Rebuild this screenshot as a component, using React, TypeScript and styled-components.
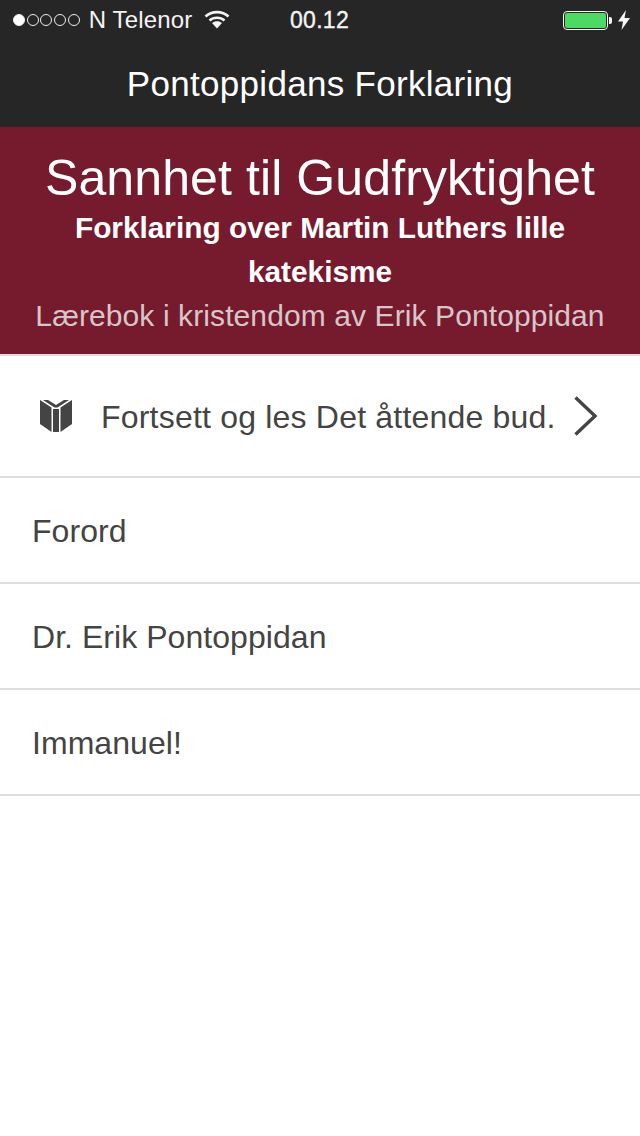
import React from "react";
import styled, { createGlobalStyle } from "styled-components";

const Global = createGlobalStyle`
  html, body { margin: 0; padding: 0; background: #fff; }
  body { font-family: "Liberation Sans", Arial, sans-serif; }
`;
const Page = styled.div`
  width: 640px; height: 1136px; overflow: hidden; background: #fff; display: flex; flex-direction: column;
`;
const TopBar = styled.header`
  height: 127px; background: #262626; color: #fff; display: flex; flex-direction: column; flex: none;
`;
const Status = styled.div`
  height: 40px; display: grid; grid-template-columns: 1fr auto 1fr; align-items: center; padding: 0 10px 0 13px; font-size: 24px; line-height: 40px; color: #f4f4f4;
`;
const StatusLeft = styled.div`display: flex; align-items: center;`;
const Carrier = styled.span`margin-left: 9px; letter-spacing: 0.15px;`;
const Wifi = styled.svg`margin-left: 12px; margin-top: -3px;`;
const Clock = styled.span`font-size: 23px; letter-spacing: 0.3px; padding-right: 4px; -webkit-text-stroke: 0.35px #f4f4f4;`;
const StatusRight = styled.div`display: flex; align-items: center; justify-content: flex-end; gap: 6px;`;
const Dots = styled.div`display: flex; gap: 1.7px; align-items: center;`;
const Dot = styled.span<{ $on?: boolean }>`
  width: 12px; height: 12px; border-radius: 50%; box-sizing: border-box; border: 1.3px solid #eee; background: ${p => (p.$on ? "#fff" : "transparent")};
`;
const Battery = styled.div`display: flex; align-items: center;`;
const BatteryBody = styled.div`
  width: 45px; height: 19px; box-sizing: border-box; border: 1.5px solid #f4f4f4; border-radius: 4px; padding: 1px; display: flex;
`;
const BatteryFill = styled.div`flex: 1; background: #4cd964; border-radius: 2px;`;
const BatteryTip = styled.div`width: 3px; height: 7px; background: #f4f4f4; border-radius: 0 2px 2px 0; margin-left: 1px;`;
const NavTitle = styled.h1`
  margin: 0; height: 87px; display: flex; align-items: center; justify-content: center; box-sizing: border-box; font-size: 35px; font-weight: 400; letter-spacing: 0.3px;
`;
const Banner = styled.section`
  height: 229px; flex: none; box-sizing: border-box; background: #761a2e; border-bottom: 2px solid #e3dcdd; color: #fff; text-align: center; padding: 24px 20px 0;
`;
const BannerTitle = styled.h2`margin: 0; font-size: 50px; line-height: 55px; font-weight: 400; letter-spacing: 0.1px;`;
const BannerSub = styled.h3`margin: 0; font-size: 29.8px; line-height: 44px; font-weight: 700;`;
const BannerNote = styled.p`margin: 0; font-size: 30px; line-height: 44px; font-weight: 400; color: #d9c5c9; white-space: nowrap; letter-spacing: 0.1px;`;
const List = styled.ul`list-style: none; margin: 0; padding: 0;`;
const ContinueRow = styled.li`
  height: 122px; box-sizing: border-box; border-bottom: 2px solid #dedede; display: flex; align-items: center; padding: 0 42px 0 40px; color: #444;
`;
const Row = styled.li`
  height: 106px; box-sizing: border-box; border-bottom: 2px solid #dedede; display: flex; align-items: center; padding: 2px 32px 0; color: #444; font-size: 32px; letter-spacing: 0.05px;
`;
const ContinueText = styled.span`flex: 1; font-size: 32px; margin-left: 29px; padding-top: 2px; white-space: nowrap; letter-spacing: 0.2px;`;

const App: React.FC = () => (
  <Page>
    <Global />
    <TopBar>
      <Status>
        <StatusLeft>
          <Dots>
            <Dot $on /><Dot /><Dot /><Dot /><Dot />
          </Dots>
          <Carrier>N Telenor</Carrier>
          <Wifi width="26" height="20" viewBox="0 0 26 20" fill="none" stroke="#f4f4f4" strokeWidth="2.6">
            <path d="M1.5 7.5C7.8 1.6 18.2 1.6 24.5 7.5" />
            <path d="M5.5 11.5C9.6 7.8 16.4 7.8 20.5 11.5" />
            <path d="M8 14L13 19.5L18 14C15 11.8 11 11.8 8 14Z" fill="#f4f4f4" stroke="none" />
          </Wifi>
        </StatusLeft>
        <Clock>00.12</Clock>
        <StatusRight>
          <Battery>
            <BatteryBody><BatteryFill /></BatteryBody>
            <BatteryTip />
          </Battery>
          <svg width="12" height="20" viewBox="0 0 12 20">
            <path d="M8 0L0 11.5H5L3.5 20L12 8H6.5Z" fill="#f4f4f4" />
          </svg>
        </StatusRight>
      </Status>
      <NavTitle>Pontoppidans Forklaring</NavTitle>
    </TopBar>
    <Banner>
      <BannerTitle>Sannhet til Gudfryktighet</BannerTitle>
      <BannerSub>Forklaring over Martin Luthers lille katekisme</BannerSub>
      <BannerNote>Lærebok i kristendom av Erik Pontoppidan</BannerNote>
    </Banner>
    <List>
      <ContinueRow>
        <svg width="32" height="32" viewBox="0 0 32 32" fill="#444">
          <path d="M0 0L11.5 7.5V32L0 24Z" />
          <path d="M32 0L20.5 7.5V32L32 24Z" />
          <path d="M13 9H19V32H13Z" />
          <path d="M3 0H8L16 5L24 0H29L17.5 7.5H14.5Z" />
        </svg>
        <ContinueText>Fortsett og les Det åttende bud.</ContinueText>
        <svg width="24" height="40" viewBox="0 0 24 40" fill="none" stroke="#444" strokeWidth="3.4">
          <path d="M1.5 1.5L21 20L1.5 38.5" />
        </svg>
      </ContinueRow>
      <Row>Forord</Row>
      <Row>Dr. Erik Pontoppidan</Row>
      <Row>Immanuel!</Row>
    </List>
  </Page>
);

export default App;
